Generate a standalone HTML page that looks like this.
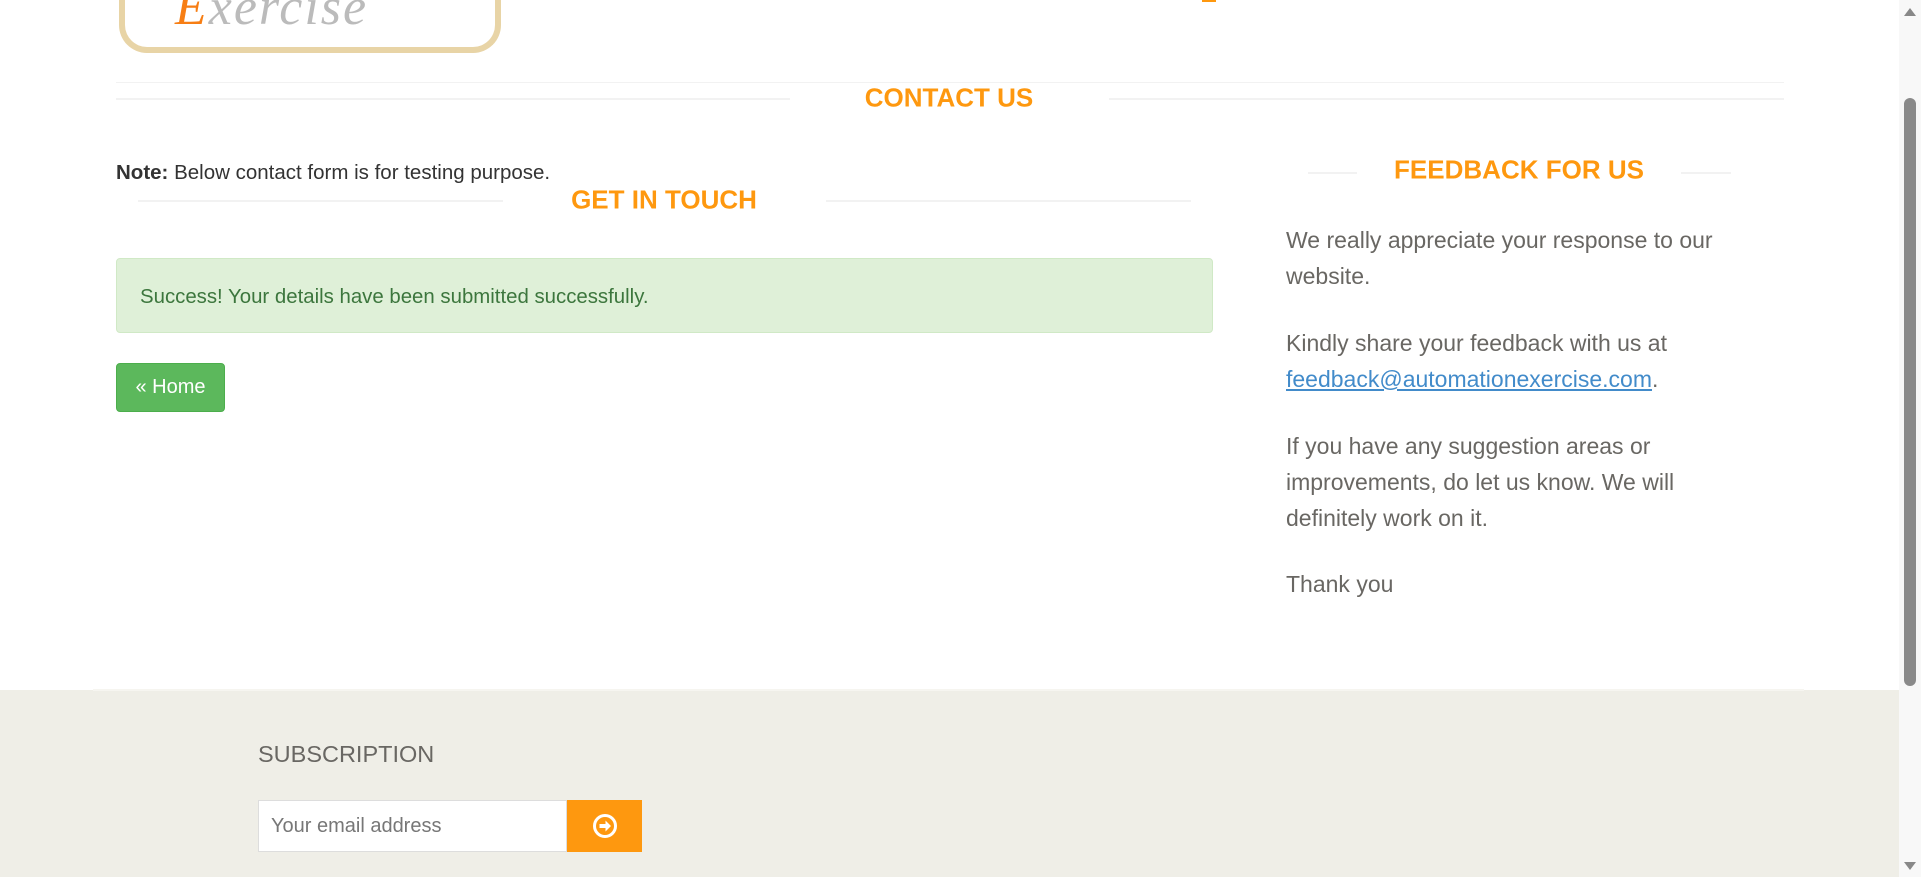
<!DOCTYPE html>
<html><head><meta charset="utf-8"><style>
*{margin:0;padding:0;box-sizing:border-box}
body{width:1921px;height:877px;overflow:hidden;background:#fff;font-family:"Liberation Sans",Arial,sans-serif;position:relative;color:#696763}
.a{position:absolute}
.line{position:absolute;height:2px;background:#f2f2f2}
.h{position:absolute;color:#FE980F;font-weight:bold;font-size:26px;white-space:nowrap;transform:translate(-50%,-50%)}
.p{position:absolute;left:1286px;font-size:23px;line-height:36px;color:#696763;width:460px}
</style></head><body>
<div class="a" style="left:119px;top:-40px;width:382px;height:93px;border:6px solid #e8d4a6;border-top:none;border-radius:0 0 28px 28px"></div>
<div class="a" style="left:175px;top:-22px;font-family:'Liberation Serif',serif;font-style:italic;font-size:52px;color:#bbb;letter-spacing:2px"><span style="color:#f77e14">E</span>xercise</div>
<div class="a" style="left:1202px;top:0;width:14px;height:2px;background:#FE980F"></div>

<div class="line" style="left:116px;top:82px;width:1668px;height:1px"></div>
<div class="line" style="left:116px;top:98px;width:674px"></div>
<div class="line" style="left:1109px;top:98px;width:675px"></div>
<div class="h" style="left:949px;top:98px">CONTACT US</div>

<div class="a" style="left:116px;top:161px;font-size:20.5px;color:#333"><b>Note:</b> Below contact form is for testing purpose.</div>
<div class="line" style="left:138px;top:200px;width:365px"></div>
<div class="line" style="left:826px;top:200px;width:365px"></div>
<div class="h" style="left:664px;top:200px">GET IN TOUCH</div>

<div class="a" style="left:116px;top:258px;width:1097px;height:75px;background:#dff0d8;border:1px solid #d0e9c6;border-radius:4px;color:#3c763d;font-size:20.4px;padding:27px 0 0 23px">Success! Your details have been submitted successfully.</div>
<div class="a" style="left:116px;top:363px;width:109px;height:49px;background:#5cb85c;border:1px solid #4cae4c;border-radius:4px;color:#fff;font-size:20px;padding-top:12px;text-align:center">« Home</div>

<div class="line" style="left:1308px;top:172px;width:49px"></div>
<div class="line" style="left:1681px;top:172px;width:50px"></div>
<div class="h" style="left:1519px;top:170px">FEEDBACK FOR US</div>
<div class="p" style="top:222px">We really appreciate your response to our website.</div>
<div class="p" style="top:325px">Kindly share your feedback with us at <span style="color:#428bca;text-decoration:underline">feedback@automationexercise.com</span>.</div>
<div class="p" style="top:428px">If you have any suggestion areas or improvements, do let us know. We will definitely work on it.</div>
<div class="p" style="top:566px">Thank you</div>

<div class="a" style="left:0;top:690px;width:1899px;height:187px;background:#efeee7"></div>
<div class="a" style="left:93px;top:689px;width:1711px;height:2px;background:#f6f5f0"></div>
<div class="a" style="left:258px;top:741px;font-size:23.5px;color:#696763">SUBSCRIPTION</div>
<div class="a" style="left:258px;top:800px;width:309px;height:52px;background:#fff;border:1px solid #ddd;font-size:20px;color:#777;padding:14px 0 0 12px">Your email address</div>
<div class="a" style="left:567px;top:800px;width:75px;height:52px;background:#FE980F"></div>
<svg class="a" style="left:592px;top:813px" width="26" height="26" viewBox="0 0 26 26"><circle cx="13" cy="13" r="10.5" fill="none" stroke="#fff" stroke-width="3"/><path d="M7.5 11h6V7.5l5.5 5.5-5.5 5.5V15h-6z" fill="#fff"/></svg>

<div class="a" style="left:1899px;top:0;width:22px;height:877px;background:#f8f8f8"></div>
<div class="a" style="left:1904px;top:98px;width:12px;height:588px;background:#8a8a8a;border-radius:6px"></div>
<div class="a" style="left:1904px;top:8px;width:0;height:0;border-left:6px solid transparent;border-right:6px solid transparent;border-bottom:8px solid #888"></div>
<div class="a" style="left:1904px;top:862px;width:0;height:0;border-left:6px solid transparent;border-right:6px solid transparent;border-top:8px solid #888"></div>
</body></html>
